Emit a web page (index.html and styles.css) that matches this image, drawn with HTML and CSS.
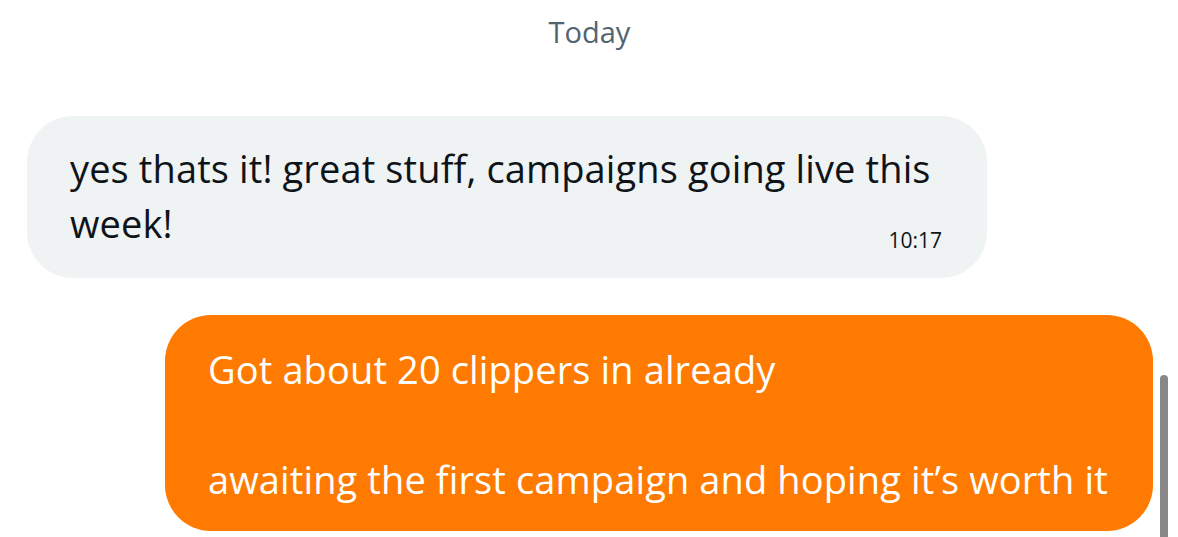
FILE: index.html
```html
<!DOCTYPE html>
<html lang="en">
<head>
<meta charset="utf-8">
<title>Chat</title>
<link rel="stylesheet" href="styles.css">
</head>
<body>
<main class="chat">
  <div class="day">Today</div>
  <div class="msg msg-in">
    <div class="bubble bubble-in">
      <p class="text">yes thats it! great stuff, campaigns going live this<br>week!<span class="time">10:17</span></p>
    </div>
  </div>
  <div class="msg msg-out">
    <div class="bubble bubble-out">
      <p class="text">Got about 20 clippers in already</p>
      <p class="text gap">awaiting the first campaign and hoping it’s worth it</p>
    </div>
  </div>
  <div class="scrollbar"></div>
</main>
</body>
</html>
```

FILE: styles.css
```css
* { box-sizing: border-box; }
html, body { margin: 0; padding: 0; background: #ffffff; }
body {
  width: 1178px;
  height: 537px;
  overflow: hidden;
  font-family: "Open Sans", "Liberation Sans", Arial, sans-serif;
  color: #0f1419;
}
.chat {
  position: relative;
  display: flex;
  flex-direction: column;
  height: 537px;
  padding: 14px 25px 0 27px;
}
.day {
  align-self: center;
  margin-left: -1px;
  font-size: 29px;
  line-height: 36px;
  color: #536471;
}
.msg { display: flex; }
.msg-in { margin-top: 66px; justify-content: flex-start; }
.msg-out { margin-top: 37px; justify-content: flex-end; }
.bubble {
  border-radius: 46px;
}
.bubble-in {
  width: 960px;
  height: 162px;
  background: #eff3f4;
  padding: 25px 45px 27px 43px;
}
.text {
  margin: 0;
  font-size: 38px;
  letter-spacing: 0.12px;
  line-height: 55px;
}
.time {
  float: right;
  margin-top: 33px;
  font-size: 21px;
  line-height: 22px;
  letter-spacing: 0;
}
.bubble-out {
  width: 988px;
  height: 216px;
  background: #ff7a00;
  color: #ffffff;
  padding: 27px 43px 24px 43px;
}
.bubble-out .text { white-space: nowrap; }
.text.gap { margin-top: 55px; }
.scrollbar {
  position: absolute;
  right: 10px;
  top: 375px;
  width: 8px;
  height: 170px;
  border-radius: 4px;
  background: #888888;
}
```
